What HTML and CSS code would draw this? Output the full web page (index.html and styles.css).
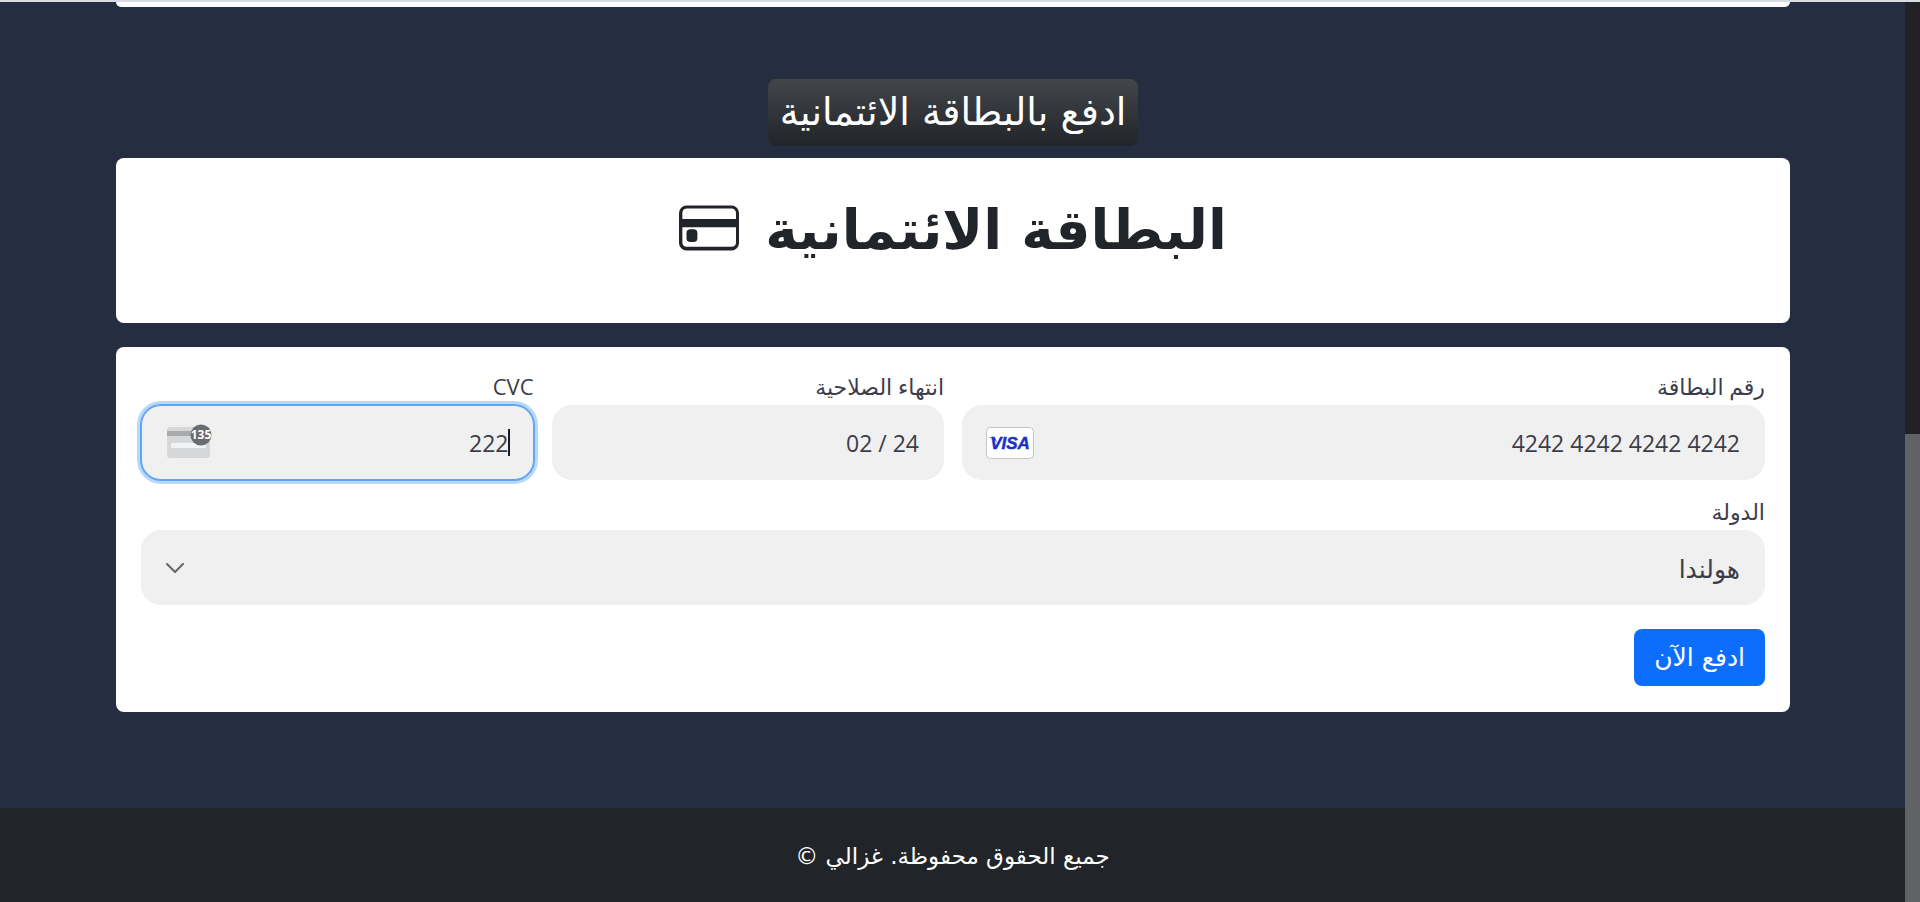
FILE: index.html
```html
<!DOCTYPE html>
<html lang="ar" dir="rtl">
<head>
<meta charset="utf-8">
<title>ادفع بالبطاقة الائتمانية</title>
<link rel="stylesheet" href="styles.css">
</head>
<body>
<div class="viewport">
  <div class="page">
    <main class="content">
      <div class="card card-previous"></div>
      <h2 class="badge">ادفع بالبطاقة الائتمانية</h2>
      <section class="card card-title">
        <h1 class="title">البطاقة الائتمانية</h1>
        <svg class="title-icon" viewBox="0 0 16 16" fill="currentColor" aria-hidden="true">
          <path d="M14 2.800a1.200 1.200 0 0 1 1.200 1.200v8a1.200 1.200 0 0 1-1.200 1H2A1.200 1.200 0 0 1 .9 12V4A1.200 1.200 0 0 1 2 2.800zM2 2a2 2 0 0 0-2 2v8a2 2 0 0 0 2 2h12a2 2 0 0 0 2-2V4a2 2 0 0 0-2-2z"/>
          <rect x="2" y="8.300" width="2.900" height="3.400" rx="1"/>
          <path d="M.5 5.600h15v2.200H.5z"/>
        </svg>
      </section>
      <form class="card card-form">
        <div class="fields">
          <div class="field field-wide">
            <label class="label" for="number">رقم البطاقة</label>
            <div class="control">
              <input class="input" id="number" dir="ltr" type="text" value="4242 4242 4242 4242">
              <svg class="brand" viewBox="0 0 48 32" role="img" aria-label="VISA">
                <rect x=".5" y=".5" width="47" height="31" rx="4" fill="#fff" stroke="#c4c4c8"/>
                <path d="M3 10.500h6l2 5C9 12.500 6.500 11.200 3 10.800z" fill="#1a34c0"/>
                <text class="brand-name" x="24" y="22" text-anchor="middle">VISA</text>
              </svg>
            </div>
          </div>
          <div class="field">
            <label class="label" for="expiry">انتهاء الصلاحية</label>
            <div class="control">
              <input class="input" id="expiry" dir="ltr" type="text" value="02 / 24">
            </div>
          </div>
          <div class="field">
            <label class="label" for="cvc">CVC</label>
            <div class="control">
              <input class="input input-active" id="cvc" dir="ltr" type="text" value="222">
              <span class="caret"></span>
              <svg class="brand" viewBox="0 0 48 32" aria-hidden="true">
                <rect x="2" y="0" width="43" height="31" rx="3" fill="#d6d7d9"/>
                <rect x="2" y="4" width="43" height="5" fill="#a9aaad"/>
                <rect x="6" y="16" width="35" height="5" rx="1" fill="#f2f3f4"/>
                <circle cx="36" cy="8" r="10.500" fill="#6b6c70"/>
                <text class="cvc-digits" x="36" y="12" text-anchor="middle">135</text>
              </svg>
            </div>
          </div>
          <div class="field field-full">
            <label class="label" for="country">الدولة</label>
            <div class="control">
              <select class="input select" id="country"><option>هولندا</option></select>
              <svg class="chevron" viewBox="0 0 18 10" fill="none" stroke="#66676b" stroke-width="2" stroke-linecap="round" stroke-linejoin="round" aria-hidden="true"><path d="M1 1l8 8 8-8"/></svg>
            </div>
          </div>
        </div>
        <button class="pay" type="button">ادفع الآن</button>
      </form>
    </main>
    <footer class="footer">جميع الحقوق محفوظة. غزالي ©</footer>
  </div>
  <div class="scrollbar"><div class="thumb"></div></div>
</div>
</body>
</html>
```
FILE: styles.css
```css
* { box-sizing: border-box; }
body {
  margin: 0;
  font-family: "DejaVu Sans", sans-serif;
  color: #212529;
  background: #252d40;
}
.viewport {
  display: flex;
  direction: ltr;
  min-height: 100vh;
  border-top: 2px solid #d8dbdf;
}
.page {
  direction: rtl;
  flex: 1;
  display: flex;
  flex-direction: column;
}
.scrollbar {
  width: 15px;
  display: flex;
  flex-direction: column;
  justify-content: flex-end;
  background: #222226;
}
.thumb { height: 52%; background: #616266; }
.content {
  flex: 1;
  display: flex;
  flex-direction: column;
  padding: 0 115px 0 116px;
}
.card { background: #fff; border-radius: 8px; }
.card-previous { height: 5px; border-radius: 0 0 8px 8px; }
.badge {
  align-self: center;
  margin: 72px 0 12px;
  padding: 0 12px;
  border-radius: 8px;
  background: linear-gradient(#42464b, #212529);
  color: #fff;
  font-size: 38px;
  font-weight: 400;
  line-height: 67px;
}
.card-title {
  display: flex;
  justify-content: center;
  align-items: flex-start;
  gap: 26px;
  height: 165px;
  padding-top: 40px;
}
.title { margin: 0; font-size: 55px; line-height: 64px; }
.title-icon { width: 60px; height: 60px; }
.card-form { margin-top: 24px; padding: 24px 25px 26px; }
.fields {
  display: grid;
  grid-template-columns: repeat(4, 1fr);
  gap: 16px 18px;
}
.field-wide { grid-column: span 2; }
.field-full { grid-column: span 4; }
.label {
  display: block;
  height: 32px;
  margin-bottom: 2px;
  font-family: "Open Sans", "DejaVu Sans", sans-serif;
  font-size: 22px;
  line-height: 30px;
  color: #3c3d48;
}
.control { position: relative; }
.input {
  display: block;
  width: 100%;
  height: 75px;
  padding: 0 24px;
  border: 1px solid #f0f0f0;
  border-radius: 20px;
  outline: 0;
  background: #f0f0f0;
  color: #3c3d48;
  font-family: "Open Sans", "DejaVu Sans", sans-serif;
  font-size: 23px;
  text-align: right;
}
.input-active {
  border-color: #5fa4f5;
  box-shadow: 0 0 0 1px #5fa4f5, 0 0 0 4px #b9d9fc;
}
.select { font-size: 25px; appearance: none; }
.caret {
  position: absolute;
  top: 24px;
  right: 24px;
  width: 2px;
  height: 27px;
  background: #1a1b25;
}
.brand {
  position: absolute;
  top: 22px;
  left: 24px;
  width: 48px;
  height: 32px;
  overflow: visible;
}
.brand-name {
  font: italic 700 17px "Liberation Sans", sans-serif;
  fill: #1a34c0;
  stroke: #1a34c0;
  stroke-width: .5px;
}
.cvc-digits {
  font: 700 12px "Open Sans", sans-serif;
  fill: #fff;
}
.chevron {
  position: absolute;
  top: 33px;
  left: 25px;
  width: 18px;
  height: 10px;
}
.pay {
  display: block;
  margin-top: 24px;
  padding: 0 20px;
  border: 0;
  border-radius: 8px;
  background: #0d6efd;
  color: #fff;
  font-family: "DejaVu Sans", sans-serif;
  font-size: 25px;
  line-height: 57px;
}
.footer {
  height: 94px;
  background: #212529;
  color: #fff;
  font-size: 23px;
  line-height: 96px;
  text-align: center;
}
```
